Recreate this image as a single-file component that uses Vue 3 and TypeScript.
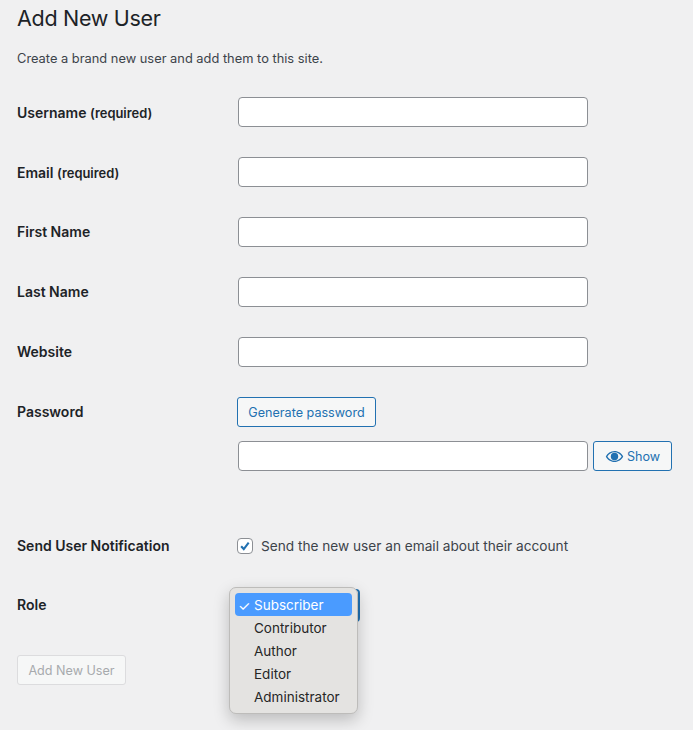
<script setup lang="ts">
const rows = [
  { label: 'Username', note: '(required)' },
  { label: 'Email', note: '(required)' },
  { label: 'First Name', note: '' },
  { label: 'Last Name', note: '' },
  { label: 'Website', note: '' },
]
const roles = ['Contributor', 'Author', 'Editor', 'Administrator']
</script>

<template>
  <main class="page">
    <h1 class="title">Add New User</h1>
    <p class="intro">Create a brand new user and add them to this site.</p>
    <form class="form" @submit.prevent>
      <div v-for="row in rows" :key="row.label" class="row">
        <label class="label" :class="{ 'has-note': row.note }">{{ row.label }} <span v-if="row.note" class="note">{{ row.note }}</span></label>
        <input class="input" type="text" />
      </div>
      <div class="row password-row">
        <label class="label">Password</label>
        <div class="password-cell">
          <button class="btn generate" type="button">Generate password</button>
          <div class="password-line">
            <input class="input" type="text" />
            <button class="btn show" type="button">
              <svg class="eye" viewBox="0 0 20 20" aria-hidden="true">
                <path d="M10 4.2C5.9 4.2 2.6 6.6 0.8 10c1.8 3.4 5.1 5.8 9.2 5.8s7.4-2.4 9.2-5.8C17.4 6.6 14.1 4.2 10 4.2zm0 1.4c3.2 0 5.9 1.700 7.500 4.400-1.600 2.700-4.300 4.400-7.500 4.400S4.100 12.700 2.500 10C4.100 7.300 6.800 5.600 10 5.600z" />
                <circle cx="10" cy="10" r="3.900" />
              </svg>
              <span>Show</span>
            </button>
          </div>
        </div>
      </div>
      <div class="row notify-row">
        <label class="label">Send User Notification</label>
        <label class="check-line">
          <span class="checkbox">
            <svg viewBox="0 0 16 16" aria-hidden="true"><path d="M3.600 8.200l3 3.300 5.600-7.300" /></svg>
          </span>
          Send the new user an email about their account
        </label>
      </div>
      <div class="row role-row">
        <label class="label">Role</label>
        <div class="role-cell">
          <div class="select"></div>
          <div class="menu">
            <div class="option selected"><span class="tick">✓</span>Subscriber</div>
            <div v-for="role in roles" :key="role" class="option">{{ role }}</div>
          </div>
        </div>
      </div>
      <button class="btn submit" type="button" disabled>Add New User</button>
    </form>
  </main>
</template>

<style>
html, body { background: #f0f0f1; }
</style>

<style scoped>
.page {
  box-sizing: border-box;
  width: 693px;
  height: 730px;
  padding: 0 17px;
  overflow: hidden;
  background: #f0f0f1;
  color: #1d2327;
  font-family: Inter, "Liberation Sans", sans-serif;
  font-size: 13px;
}
.title {
  margin: 0;
  height: 36px;
  font-size: 21.500px;
  letter-spacing: -0.3px;
  line-height: 36px;
  font-weight: 400;
}
.intro {
  margin: 15px 0 0;
  height: 16px;
  line-height: 16px;
  font-size: 12.850px;
  color: #3c434a;
}
.form {
  margin-top: 15px;
}
.row {
  display: flex;
  align-items: center;
  height: 60px;
}
.label {
  flex: 0 0 221px;
  padding-bottom: 2px;
  font-size: 14px;
  font-weight: 600;
  color: #1d2327;
}
.label.has-note {
  padding-bottom: 0;
}
.note {
  font-size: 12.900px;
}
.input {
  box-sizing: border-box;
  width: 350px;
  height: 30px;
  margin: 0;
  padding: 0 8px;
  background: #fff;
  border: 1px solid #8c8f94;
  border-radius: 4px;
}
.btn {
  box-sizing: border-box;
  height: 30px;
  margin: 0;
  padding: 0;
  font-family: inherit;
  font-size: 12.600px;
  background: #f6f7f7;
  border: 1px solid #2271b1;
  border-radius: 3px;
  color: #2271b1;
}
.password-row {
  height: 120px;
  align-items: flex-start;
  padding-top: 15px;
  box-sizing: border-box;
}
.password-row .label {
  padding-bottom: 0;
  line-height: 30px;
}
.password-cell {
  display: flex;
  flex-direction: column;
  align-items: flex-start;
  gap: 14px;
}
.generate {
  width: 139px;
  margin-left: -1px;
}
.password-line {
  display: flex;
  gap: 5px;
}
.show {
  width: 79px;
  display: flex;
  align-items: center;
  justify-content: center;
  gap: 3px;
}
.eye {
  width: 19px;
  height: 19px;
  fill: #2271b1;
}
.notify-row {
  height: 88px;
}
.check-line {
  display: flex;
  align-items: center;
  gap: 8px;
  margin-left: -1px;
  font-size: 13.650px;
  color: #3c434a;
}
.checkbox {
  box-sizing: border-box;
  width: 16px;
  height: 16px;
  background: #fff;
  border: 1px solid #8c8f94;
  border-radius: 4px;
}
.checkbox svg {
  display: block;
  width: 14px;
  height: 14px;
  fill: none;
  stroke: #2271b1;
  stroke-width: 2.400;
}
.role-row {
  height: 30px;
}
.role-cell {
  position: relative;
  width: 122px;
  height: 33px;
}
.select {
  box-sizing: border-box;
  height: 33px;
  background: #fff;
  border: 2px solid #2271b1;
  border-radius: 4px;
}
.menu {
  position: absolute;
  top: -2px;
  left: -9px;
  box-sizing: border-box;
  width: 129px;
  height: 127px;
  padding: 5px;
  background: #e4e3e1;
  border: 1px solid #bdbcba;
  border-radius: 7px;
  box-shadow: 0 6px 16px rgba(0, 0, 0, 0.22);
  font-size: 13.500px;
  color: #262626;
}
.option {
  position: relative;
  height: 23px;
  line-height: 25px;
  padding-left: 19px;
  border-radius: 4px;
}
.selected {
  background: #4a9bff;
  color: #fff;
}
.tick {
  position: absolute;
  left: 3px;
  font-size: 14px;
}
.submit {
  display: block;
  width: 109px;
  margin-top: 35px;
  background: #f6f7f7;
  border-color: #dcdcde;
  color: #a7aaad;
}
</style>
